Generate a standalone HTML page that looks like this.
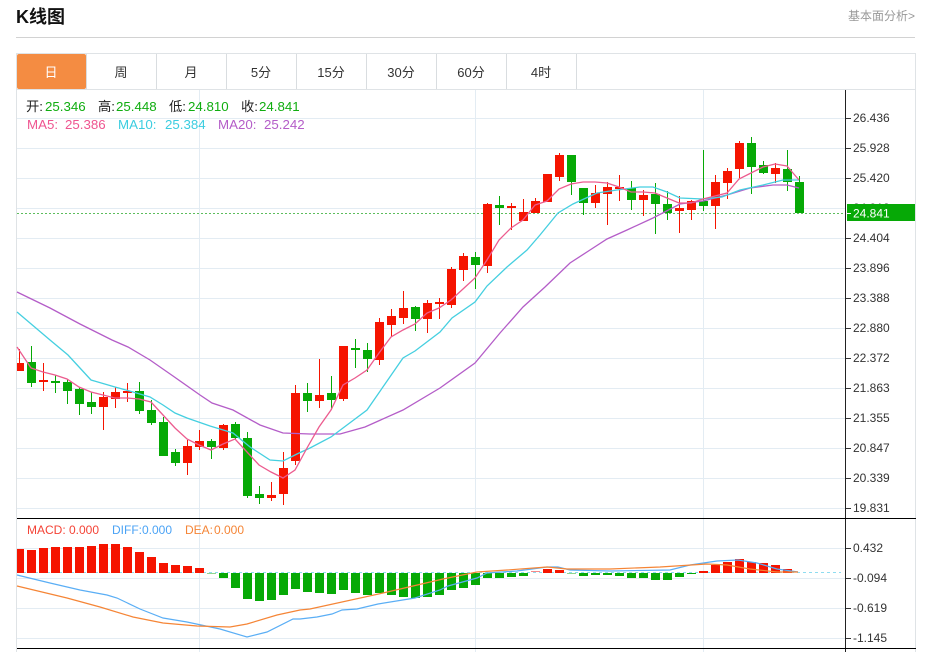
<!DOCTYPE html>
<html lang="zh"><head><meta charset="utf-8"><title>K线图</title>
<style>
html,body{margin:0;padding:0;background:#fff;width:931px;height:652px;overflow:hidden}
svg{display:block;position:absolute;left:0;top:0}
text{font-family:"Liberation Sans","Noto Sans CJK SC",sans-serif}
</style></head><body>
<svg width="931" height="652" viewBox="0 0 931 652" xmlns="http://www.w3.org/2000/svg">
<text x="16" y="23" font-size="18" font-weight="700" fill="#111">K线图</text>
<text x="848" y="20" font-size="12" fill="#999">基本面分析&gt;</text>
<path d="M16 37.5H915" stroke="#d2d2d2" fill="none"/>
<!-- frame -->
<path d="M16.5 53V652M915.5 53V652M16 53.5H916M16 89.5H916" stroke="#dfe3e6" fill="none"/>
<path d="M86.5 54V89M156.5 54V89M226.5 54V89M296.5 54V89M366.5 54V89M436.5 54V89M506.5 54V89M576.5 54V89" stroke="#d9dde0" fill="none"/>
<rect x="17" y="54" width="69" height="35" rx="2" fill="#f48c42"/>
<g font-size="13" fill="#333" text-anchor="middle">
<text x="51" y="77" fill="#fff">日</text><text x="121" y="77">周</text><text x="191" y="77">月</text><text x="261" y="77">5分</text><text x="331" y="77">15分</text><text x="401" y="77">30分</text><text x="471" y="77">60分</text><text x="541" y="77">4时</text>
</g>
<!-- grid -->
<path d="M17 118.5H845M17 148.5H845M17 178.5H845M17 208.5H845M17 238.5H845M17 268.5H845M17 298.5H845M17 328.5H845M17 358.5H845M17 388.5H845M17 418.5H845M17 448.5H845M17 478.5H845M17 508.5H845M17 548.5H845M17 578.5H845M17 608.5H845M17 638.5H845M199.5 90V652M475.5 90V652M703.5 90V652" stroke="#e3ecf3" fill="none"/>
<!-- last price -->
<path d="M17 213.5H845" stroke="#5dbd5d" stroke-dasharray="2 2" fill="none"/>
<!-- wicks -->
<path fill="none" stroke="#f51400" d="M19.5 349V363M43.5 363V391M103.5 392V430M115.5 387V408M127.5 383V402M187.5 440V475M199.5 430V450M223.5 424V450M271.5 482V501M283.5 452V505M295.5 385V465M319.5 359V408M343.5 346V401M379.5 318V365M391.5 309V337M403.5 291V324M427.5 300V333M439.5 298V319M451.5 267V308M463.5 253V281M487.5 203V273M511.5 203V230M523.5 199V221M535.5 198V213M547.5 174V202M559.5 153V181M595.5 185V208M607.5 182V225M619.5 175V201M643.5 190V216M679.5 196V233M691.5 200V220M715.5 175V229M727.5 168V199M739.5 141V178M775.5 163V183"/>
<path fill="none" stroke="#06a906" d="M31.5 346V387M55.5 375V393M67.5 379V404M79.5 387V415M91.5 392V414M139.5 382V414M151.5 400V425M163.5 417V456M175.5 449V466M211.5 439V459M235.5 422V440M247.5 432V498M259.5 486V504M307.5 383V412M331.5 376V410M355.5 339V368M367.5 343V372M415.5 306V331M475.5 252V289M499.5 196V225M571.5 155V195M583.5 188V215M631.5 181V210M655.5 183V234M667.5 191V220M703.5 150V211M751.5 137V194M763.5 161V174M787.5 150V191M799.5 176V213"/>
<!-- bodies -->
<path fill="#f51400" d="M17 363h7V371h-7zM39 380h9V382h-9zM99 397h9V407h-9zM111 392h9V399h-9zM123 391h9V393h-9zM183 446h9V463h-9zM195 441h9V447h-9zM219 425h9V448h-9zM267 495h9V498h-9zM279 468h9V494h-9zM291 393h9V461h-9zM315 395h9V401h-9zM339 346h9V399h-9zM375 322h9V360h-9zM387 316h9V325h-9zM399 308h9V318h-9zM423 303h9V319h-9zM435 302h9V304h-9zM447 269h9V305h-9zM459 256h9V270h-9zM483 204h9V266h-9zM507 206h9V208h-9zM519 212h9V221h-9zM531 201h9V213h-9zM543 174h9V202h-9zM555 155h9V177h-9zM591 193h9V203h-9zM603 187h9V194h-9zM615 187h9V189h-9zM639 195h9V200h-9zM675 208h9V211h-9zM687 201h9V210h-9zM711 182h9V206h-9zM723 171h9V183h-9zM735 143h9V169h-9zM771 168h9V174h-9z"/>
<path fill="#06a906" d="M27 362h9V383h-9zM51 381h9V383h-9zM63 382h9V391h-9zM75 389h9V404h-9zM87 402h9V407h-9zM135 391h9V411h-9zM147 410h9V423h-9zM159 422h9V456h-9zM171 452h9V463h-9zM207 441h9V447h-9zM231 424h9V438h-9zM243 438h9V496h-9zM255 494h9V498h-9zM303 393h9V401h-9zM327 393h9V400h-9zM351 348h9V350h-9zM363 350h9V359h-9zM411 307h9V319h-9zM471 257h9V265h-9zM495 205h9V208h-9zM567 155h9V182h-9zM579 188h9V203h-9zM627 188h9V200h-9zM651 194h9V204h-9zM663 204h9V213h-9zM699 201h9V206h-9zM747 143h9V167h-9zM759 165h9V173h-9zM783 169h9V182h-9zM795 182h9V213h-9z"/>
<!-- MAs -->
<polyline fill="none" stroke="#b45dc8" stroke-width="1.3" points="17,292 50,308 80,324 112,340 128,347 150,360 173,376 200,395 212,403 233,410 260,425 283,433 310,434 340,434 365,427 403,410 440,388 475,363 500,333 523,307 545,287 570,263 590,250 607,239 627,230 653,218 680,204 703,201 727,195 750,188 773,185 787,185 799,188"/>
<polyline fill="none" stroke="#45cfe0" stroke-width="1.3" points="17,312 50,340 68,355 91,380 115,387 133,392 150,397 163,405 175,413 187,418 210,426 233,433 250,447 270,460 283,461 297,454 310,448 331,437 343,428 367,410 403,358 415,351 440,332 452,318 475,302 487,286 507,267 527,250 540,235 558,213 573,204 597,193 617,190 640,187 653,187 667,192 680,198 703,199 722,197 740,190 763,185 783,180 799,180"/>
<polyline fill="none" stroke="#ec5c8f" stroke-width="1.3" points="17,347 31,368 43,372 55,375 67,379 79,387 91,392 103,395 115,398 127,398 139,399 151,402 163,415 175,428 187,439 199,445 211,450 223,444 235,439 247,452 259,465 271,472 283,478 295,470 307,448 319,427 331,410 343,385 355,378 367,370 379,353 391,337 403,330 415,324 427,313 439,308 451,300 463,289 475,278 487,260 499,240 511,228 523,220 535,205 547,201 559,189 571,184 583,182 595,182 607,183 619,187 631,192 643,192 655,193 667,198 679,203 691,203 703,199 715,196 727,193 739,179 751,173 763,167 775,164 787,166 799,180"/>
<!-- MACD -->
<path d="M17 572.5H841" stroke="#8edcf0" stroke-dasharray="3 3" fill="none"/>
<path fill="#f51400" d="M17 549h7V573h-7zM27 550h9V573h-9zM39 548h9V573h-9zM51 547h9V573h-9zM63 547h9V573h-9zM75 547h9V573h-9zM87 546h9V573h-9zM99 544h9V573h-9zM111 544h9V573h-9zM123 547h9V573h-9zM135 552h9V573h-9zM147 557h9V573h-9zM159 563h9V573h-9zM171 565h9V573h-9zM183 566h9V573h-9zM195 568h9V573h-9zM699 571h9V573h-9zM711 565h9V573h-9zM723 562h9V573h-9zM735 559h9V573h-9zM747 562h9V573h-9zM759 563h9V573h-9zM771 565h9V573h-9zM783 569h9V573h-9z"/>
<path fill="#06a906" d="M219 573h9V578h-9zM231 573h9V588h-9zM243 573h9V599h-9zM255 573h9V601h-9zM267 573h9V600h-9zM279 573h9V595h-9zM291 573h9V589h-9zM303 573h9V592h-9zM315 573h9V593h-9zM327 573h9V594h-9zM339 573h9V590h-9zM351 573h9V593h-9zM363 573h9V595h-9zM375 573h9V593h-9zM387 573h9V595h-9zM399 573h9V597h-9zM411 573h9V598h-9zM423 573h9V597h-9zM435 573h9V595h-9zM447 573h9V590h-9zM459 573h9V588h-9zM471 573h9V585h-9zM483 573h9V578h-9zM495 573h9V578h-9zM507 573h9V577h-9zM519 573h9V576h-9zM579 573h9V576h-9zM591 573h9V575h-9zM603 573h9V575h-9zM615 573h9V576h-9zM627 573h9V578h-9zM639 573h9V578h-9zM651 573h9V580h-9zM663 573h9V580h-9zM675 573h9V577h-9zM687 573h9V574h-9z"/>
<path fill="#8fd68f" d="M207 573h9v1h-9zM567 573h9v1h-9z"/>
<path fill="#f58a8a" d="M531 571h9v1h-9z"/>
<path fill="#f51400" d="M543 569h9V573h-9zM555 570h9V573h-9z"/>
<polyline fill="none" stroke="#5aaef5" stroke-width="1.2" points="17,575 50,583 80,590 107,595 117,598 140,609 163,618 187,622 220,629 247,637 267,632 293,619 300,619 317,617 332,614 342,610 357,609 378,604 415,598 440,590 448,586 477,578 487,573 517,571 547,567 558,567 570,570 610,571 670,570 690,565 717,561 738,560 757,563 777,569 798,572"/>
<polyline fill="none" stroke="#f58536" stroke-width="1.2" points="17,586 67,598 100,607 133,617 163,623 197,626 230,627 247,624 277,615 300,610 310,609 383,593 443,579 477,572 507,570 547,567 567,569 610,569 660,567 707,564 727,565 750,569 777,572 798,572"/>
<!-- axis -->
<path d="M845.5 90V652" stroke="#222" fill="none"/>
<path d="M17 518.5H916M17 648.5H916" stroke="#000" fill="none"/>
<path d="M846 118.5h5M846 148.5h5M846 178.5h5M846 238.5h5M846 268.5h5M846 298.5h5M846 328.5h5M846 358.5h5M846 388.5h5M846 418.5h5M846 448.5h5M846 478.5h5M846 508.5h5M846 548.5h5M846 578.5h5M846 608.5h5M846 638.5h5" stroke="#333" fill="none"/>
<g font-size="12" fill="#333">
<text x="853" y="122">26.436</text><text x="853" y="152">25.928</text><text x="853" y="182">25.420</text><text x="853" y="212">24.912</text><text x="853" y="242">24.404</text><text x="853" y="272">23.896</text><text x="853" y="302">23.388</text><text x="853" y="332">22.880</text><text x="853" y="362">22.372</text><text x="853" y="392">21.863</text><text x="853" y="422">21.355</text><text x="853" y="452">20.847</text><text x="853" y="482">20.339</text><text x="853" y="512">19.831</text>
<text x="853" y="552">0.432</text><text x="853" y="582">-0.094</text><text x="853" y="612">-0.619</text><text x="853" y="642">-1.145</text>
</g>
<rect x="847" y="204" width="68" height="17" fill="#06a906"/>
<path d="M847 213.5h4" stroke="#fff" fill="none"/>
<text x="853" y="217.500" font-size="12" fill="#fff">24.841</text>
<!-- legends -->
<g font-size="13.3">
<text x="26" y="111" fill="#222">开:</text><text x="45" y="111" fill="#10ad10">25.346</text>
<text x="98" y="111" fill="#222">高:</text><text x="116" y="111" fill="#10ad10">25.448</text>
<text x="169" y="111" fill="#222">低:</text><text x="188" y="111" fill="#10ad10">24.810</text>
<text x="241" y="111" fill="#222">收:</text><text x="259" y="111" fill="#10ad10">24.841</text>
<text x="27" y="129" fill="#ef5590">MA5:</text><text x="65" y="129" fill="#ef5590">25.386</text>
<text x="118" y="129" fill="#3ccde0">MA10:</text><text x="165" y="129" fill="#3ccde0">25.384</text>
<text x="218" y="129" fill="#b45dc8">MA20:</text><text x="264" y="129" fill="#b45dc8">25.242</text>
</g>
<g font-size="12">
<text x="27" y="534" fill="#f44336">MACD:</text><text x="69" y="534" fill="#f44336">0.000</text>
<text x="112" y="534" fill="#4ba3f5">DIFF:</text><text x="142" y="534" fill="#4ba3f5">0.000</text>
<text x="185" y="534" fill="#f58536">DEA:</text><text x="214" y="534" fill="#f58536">0.000</text>
</g>
</svg>
</body></html>
